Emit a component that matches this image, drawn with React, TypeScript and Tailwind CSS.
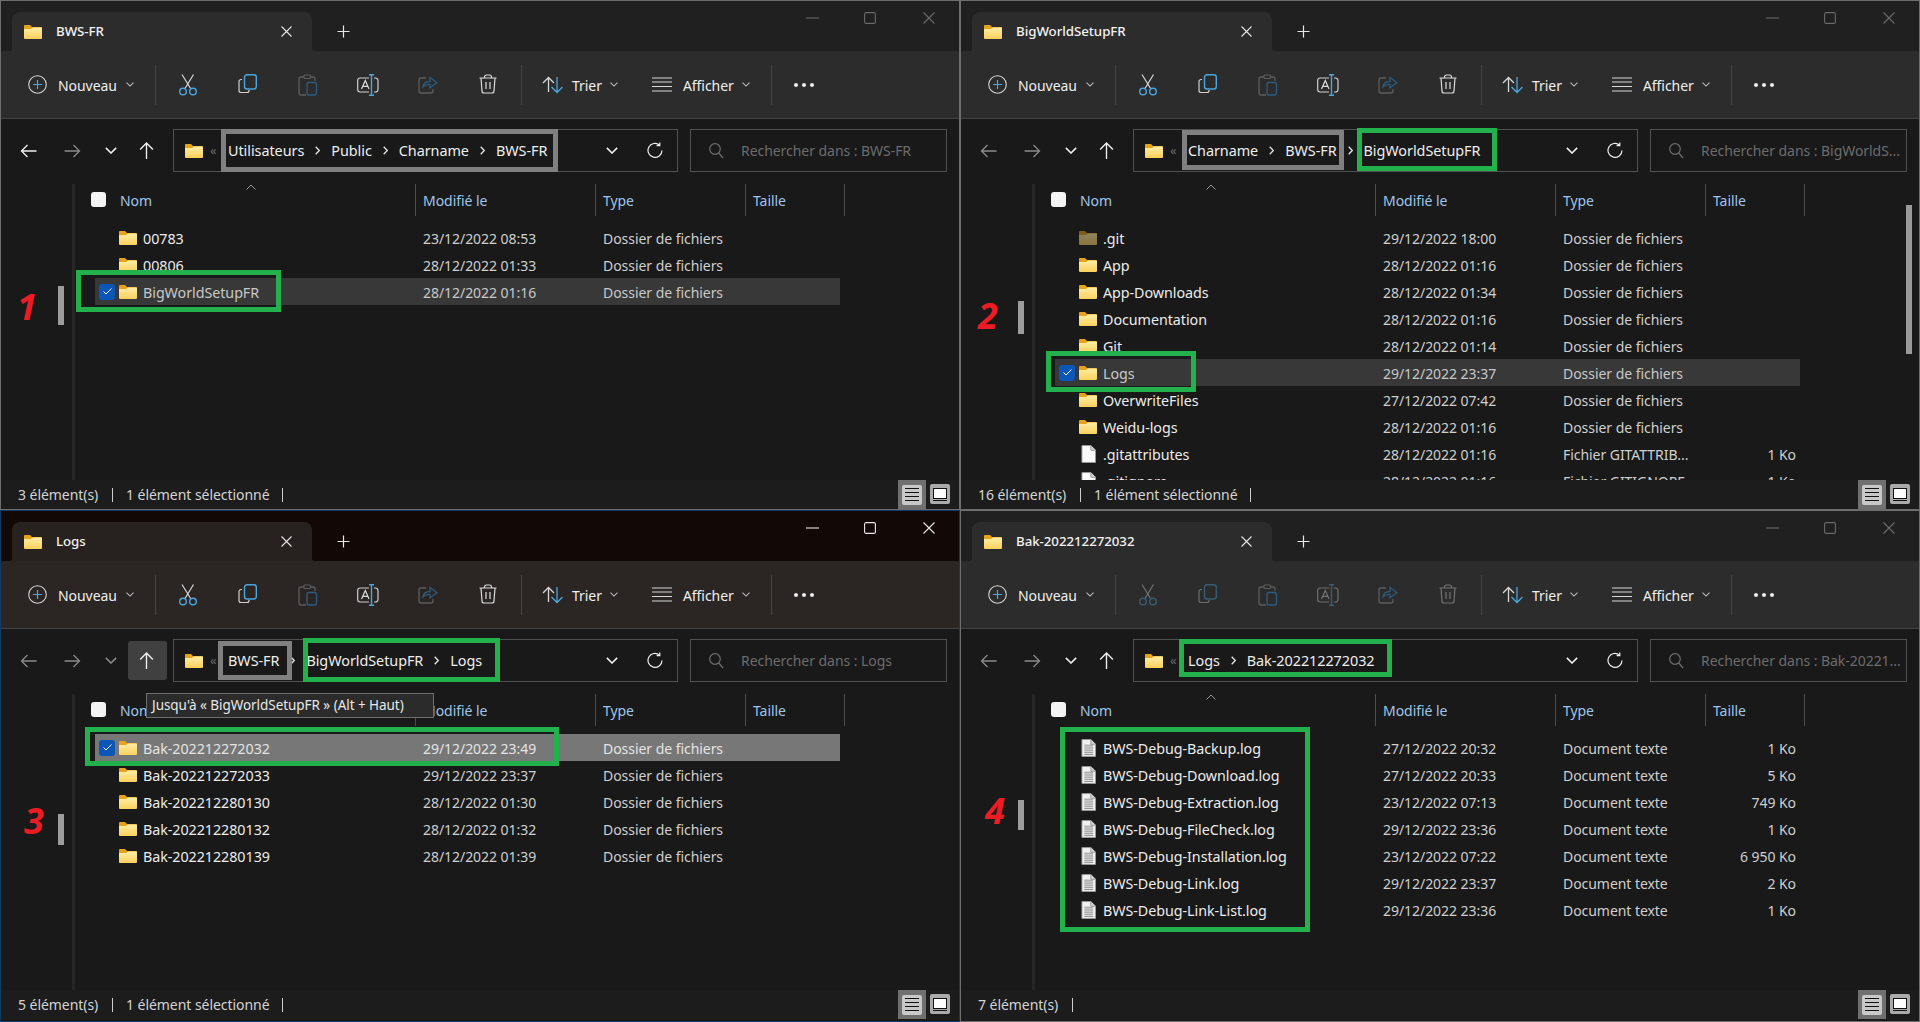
import React from "react";

const BLUE = "#4aa6de";

function Folder({ dim = false }: { dim?: boolean }) {
  const id = React.useId();
  return (
    <svg width="18" height="14" viewBox="0 0 18 14" className={dim ? "opacity-50 flex-none" : "flex-none"}>
      <defs>
        <linearGradient id={id} x1="0" y1="0" x2="0" y2="1">
          <stop offset="0" stopColor="#ffeea6" />
          <stop offset="1" stopColor="#fbd05c" />
        </linearGradient>
      </defs>
      <path d="M0 1Q0 0 1 0H6L8 2H17Q18 2 18 3V8H0Z" fill="#e7a31c" />
      <path d="M0 4H7L9 2.6H17.2Q18 2.6 18 3.4V13Q18 14 17 14H1Q0 14 0 13Z" fill={`url(#${id})`} />
    </svg>
  );
}

function FileIcon({ lines = false }: { lines?: boolean }) {
  return (
    <svg width="15" height="18" viewBox="0 0 16 19" className="flex-none">
      <path d="M1 .5H10.5L15.5 5.5V18.5H1Z" fill={lines ? "#f1f1f1" : "#fafafa"} stroke="#9a9a9a" strokeWidth="1" />
      <path d="M10.5 .5V5.5H15.5" fill="#d6d6d6" stroke="#9a9a9a" strokeWidth="1" />
      {lines && <path d="M3.5 6.5H13M3.5 8.5H13M3.5 10.5H13M3.5 12.5H13M3.5 14.5H13M3.5 16.5H13" stroke="#8a8a8a" strokeWidth="1" />}
    </svg>
  );
}

const Cut = () => (
  <svg width="20" height="22" viewBox="0 0 20 22" fill="none">
    <path d="M4 .5L12.6 14.5M15.5 .5L7 14.5" stroke="#d8d8d8" strokeWidth="1.2" />
    <circle cx="5" cy="17.5" r="3.3" stroke={BLUE} strokeWidth="1.4" />
    <circle cx="15" cy="17.5" r="3.3" stroke={BLUE} strokeWidth="1.4" />
  </svg>
);
const Copy = () => (
  <svg width="20" height="20" viewBox="0 0 20 20" fill="none">
    <path d="M4 5.5H3A2 2 0 0 0 1 7.500V16.500A2 2 0 0 0 3 18.500H9A2 2 0 0 0 11 16.500V16" stroke="#cfcfcf" strokeWidth="1.2" />
    <rect x="6.500" y=".7" width="11.800" height="14.300" rx="2.500" stroke={BLUE} strokeWidth="1.4" />
  </svg>
);
const Paste = () => (
  <svg width="20" height="22" viewBox="0 0 20 22" fill="none">
    <path d="M6 3H3A2 2 0 0 0 1 5V19A2 2 0 0 0 3 21H8M12 3H15A2 2 0 0 1 17 5V7" stroke="#5c5c5c" strokeWidth="1.3" />
    <rect x="6" y="1" width="6.500" height="3.500" rx="1" stroke="#5c5c5c" strokeWidth="1.200" />
    <rect x="9" y="8.500" width="9.500" height="12.500" rx="2" stroke="#2e5c7e" strokeWidth="1.300" />
  </svg>
);
const Rename = () => (
  <svg width="22" height="22" viewBox="0 0 22 22" fill="none">
    <path d="M12 4H3A2.500 2.500 0 0 0 .7 6.500V15.500A2.500 2.500 0 0 0 3 18H12" stroke="#cfcfcf" strokeWidth="1.200" />
    <path d="M17 4H18.500A2.500 2.500 0 0 1 21 6.500V15.500A2.500 2.500 0 0 1 18.500 18H17" stroke="#cfcfcf" strokeWidth="1.200" />
    <path d="M4.500 15L8.300 6.500L12 15M5.800 12.300H10.800" stroke="#dcdcdc" strokeWidth="1.200" />
    <path d="M12 .7H17M12 21.300H17M14.500 .7V21.300" stroke={BLUE} strokeWidth="1.400" />
  </svg>
);
const Share = () => (
  <svg width="20" height="20" viewBox="0 0 20 20" fill="none">
    <path d="M8 4H3A2 2 0 0 0 1 6V17A2 2 0 0 0 3 19H13A2 2 0 0 0 15 17V15" stroke="#5c5c5c" strokeWidth="1.300" />
    <path d="M5 13C5.500 9 8.500 7.500 12 7.500V3.500L19 8.700L12 13.800V10.500C9.500 10.300 7 11 5 13Z" stroke="#2e5c7e" strokeWidth="1.300" />
  </svg>
);
const Trash = () => (
  <svg width="18" height="20" viewBox="0 0 18 20" fill="none" stroke="#dcdcdc" strokeWidth="1.200">
    <path d="M.5 4H17.500M5.500 4V3A2 2 0 0 1 7.500 1H10.500A2 2 0 0 1 12.500 3V4" />
    <path d="M2 4L3 17A2 2 0 0 0 5 19H13A2 2 0 0 0 15 17L16 4" />
    <path d="M7 8V15M11 8V15" />
  </svg>
);
const Sort = () => (
  <svg width="22" height="18" viewBox="0 0 22 18" fill="none" strokeWidth="1.300">
    <path d="M6.500 16V1.500M1 7L6.500 1.500L12 7" stroke="#d8d8d8" />
    <path d="M15 1V16.500M9.500 11L15 16.500L20.500 11" stroke={BLUE} />
  </svg>
);
const Lines = () => (
  <svg width="20" height="15" viewBox="0 0 20 15" stroke="#d8d8d8" strokeWidth="1.100">
    <path d="M0 1H20M0 5H20M0 9.500H20M0 14H20" />
  </svg>
);
const ChevDown = ({ c = "#bdbdbd", w = 8 }: { c?: string; w?: number }) => (
  <svg width={w} height={w * 0.6} viewBox="0 0 10 6" fill="none" stroke={c} strokeWidth="1.300">
    <path d="M.7 .7L5 5L9.300 .7" />
  </svg>
);
const Crumb = () => (
  <svg width="5" height="9" viewBox="0 0 5 9" fill="none" stroke="#e4e4e4" strokeWidth="1.300" className="flex-none">
    <path d="M.7 .7L4.300 4.500L.7 8.300" />
  </svg>
);

type Row = { name: string; date: string; type: string; size?: string; icon: "folder" | "dim" | "file" | "log"; selected?: boolean };
type Note = { cls: string };
type Win = {
  title: string;
  crumbs: string[];
  search: string;
  rows: Row[];
  status: string;
  statusSel: boolean;
  sepCls: string;
  notes: Note[];
  digit?: string;
  digitCls: string;
  barCls: string;
  focused?: boolean;
  noSel?: boolean;
  back: string;
  chev: string;
  scroll?: boolean;
  tooltip?: boolean;
  heightCls: string;
  statusCls: string;
  rowSelCls?: string;
};

const d = "Dossier de fichiers";

const wins: Win[] = [
  {
    title: "BWS-FR",
    crumbs: ["Utilisateurs", "Public", "Charname", "BWS-FR"],
    search: "Rechercher dans : BWS-FR",
    rows: [
      { name: "00783", date: "23/12/2022 08:53", type: d, icon: "folder" },
      { name: "00806", date: "28/12/2022 01:33", type: d, icon: "folder" },
      { name: "BigWorldSetupFR", date: "28/12/2022 01:16", type: d, icon: "folder", selected: true },
    ],
    status: "3 élément(s)",
    statusSel: true,
    sepCls: "w-[94px]",
    notes: [
      { cls: "left-[221px] top-[129px] w-[337px] h-[43px] border-[#808080]" },
      { cls: "left-[76px] top-[270px] w-[205px] h-[42px] border-[#22b14c]" },
    ],
    digit: "1",
    digitCls: "left-[17px] top-[289px]",
    barCls: "top-[286px] h-[39px]",
    back: "#f0f0f0",
    chev: "#f0f0f0",
    heightCls: "h-[510px]",
    statusCls: "",
  },
  {
    title: "BigWorldSetupFR",
    crumbs: ["Charname", "BWS-FR", "BigWorldSetupFR"],
    search: "Rechercher dans : BigWorldS...",
    rows: [
      { name: ".git", date: "29/12/2022 18:00", type: d, icon: "dim" },
      { name: "App", date: "28/12/2022 01:16", type: d, icon: "folder" },
      { name: "App-Downloads", date: "28/12/2022 01:34", type: d, icon: "folder" },
      { name: "Documentation", date: "28/12/2022 01:16", type: d, icon: "folder" },
      { name: "Git", date: "28/12/2022 01:14", type: d, icon: "folder" },
      { name: "Logs", date: "29/12/2022 23:37", type: d, icon: "folder", selected: true },
      { name: "OverwriteFiles", date: "27/12/2022 07:42", type: d, icon: "folder" },
      { name: "Weidu-logs", date: "28/12/2022 01:16", type: d, icon: "folder" },
      { name: ".gitattributes", date: "28/12/2022 01:16", type: "Fichier GITATTRIB...", size: "1 Ko", icon: "file" },
      { name: ".gitignore", date: "28/12/2022 01:16", type: "Fichier GITIGNORE", size: "1 Ko", icon: "file" },
    ],
    status: "16 élément(s)",
    statusSel: true,
    sepCls: "w-[102px]",
    notes: [
      { cls: "left-[222px] top-[130px] w-[162px] h-[40px] border-[#808080]" },
      { cls: "left-[397px] top-[128px] w-[140px] h-[43px] border-[#22b14c]" },
      { cls: "left-[86px] top-[351px] w-[150px] h-[41px] border-[#22b14c]" },
    ],
    digit: "2",
    digitCls: "left-[18px] top-[298px]",
    barCls: "top-[301px] h-[33px]",
    back: "#8a8a8a",
    chev: "#f0f0f0",
    scroll: true,
    heightCls: "h-[510px]",
    statusCls: "",
  },
  {
    title: "Logs",
    crumbs: ["BWS-FR", "BigWorldSetupFR", "Logs"],
    search: "Rechercher dans : Logs",
    rows: [
      { name: "Bak-202212272032", date: "29/12/2022 23:49", type: d, icon: "folder", selected: true },
      { name: "Bak-202212272033", date: "29/12/2022 23:37", type: d, icon: "folder" },
      { name: "Bak-202212280130", date: "28/12/2022 01:30", type: d, icon: "folder" },
      { name: "Bak-202212280132", date: "28/12/2022 01:32", type: d, icon: "folder" },
      { name: "Bak-202212280139", date: "28/12/2022 01:39", type: d, icon: "folder" },
    ],
    status: "5 élément(s)",
    statusSel: true,
    sepCls: "w-[94px]",
    notes: [
      { cls: "left-[218px] top-[131px] w-[74px] h-[39px] border-[#808080]" },
      { cls: "left-[303px] top-[128px] w-[197px] h-[44px] border-[#22b14c]" },
      { cls: "left-[85px] top-[217px] w-[474px] h-[39px] border-[#22b14c]" },
    ],
    digit: "3",
    digitCls: "left-[24px] top-[293px]",
    barCls: "top-[304px] h-[31px]",
    focused: true,
    back: "#8a8a8a",
    chev: "#8a8a8a",
    tooltip: true,
    heightCls: "h-[512px]",
    statusCls: "mb-[2px]",
    rowSelCls: "bg-[#777777] text-[#e4e4e4]",
  },
  {
    title: "Bak-202212272032",
    crumbs: ["Logs", "Bak-202212272032"],
    search: "Rechercher dans : Bak-20221...",
    rows: [
      { name: "BWS-Debug-Backup.log", date: "27/12/2022 20:32", type: "Document texte", size: "1 Ko", icon: "log" },
      { name: "BWS-Debug-Download.log", date: "27/12/2022 20:33", type: "Document texte", size: "5 Ko", icon: "log" },
      { name: "BWS-Debug-Extraction.log", date: "23/12/2022 07:13", type: "Document texte", size: "749 Ko", icon: "log" },
      { name: "BWS-Debug-FileCheck.log", date: "29/12/2022 23:36", type: "Document texte", size: "1 Ko", icon: "log" },
      { name: "BWS-Debug-Installation.log", date: "23/12/2022 07:22", type: "Document texte", size: "6 950 Ko", icon: "log" },
      { name: "BWS-Debug-Link.log", date: "29/12/2022 23:37", type: "Document texte", size: "2 Ko", icon: "log" },
      { name: "BWS-Debug-Link-List.log", date: "29/12/2022 23:36", type: "Document texte", size: "1 Ko", icon: "log" },
    ],
    status: "7 élément(s)",
    statusSel: false,
    sepCls: "w-[94px]",
    notes: [
      { cls: "left-[219px] top-[129px] w-[213px] h-[38px] border-[#22b14c]" },
      { cls: "left-[100px] top-[217px] w-[250px] h-[205px] border-[#22b14c]" },
    ],
    digit: "4",
    digitCls: "left-[25px] top-[283px]",
    barCls: "top-[290px] h-[30px]",
    noSel: true,
    back: "#8a8a8a",
    chev: "#f0f0f0",
    heightCls: "h-[512px]",
    statusCls: "mb-[2px]",
  },
];

function Window({ w }: { w: Win }) {
  const ctl = w.focused ? "#e8e8e8" : "#6a6a6a";
  const dimAll = w.noSel ? "opacity-40" : "";
  const tabFill = w.focused ? "#27211f" : "#2c2c2c";
  return (
    <div className={`relative flex flex-col overflow-hidden bg-[#191919] outline-1 -outline-offset-1 ${w.heightCls} ${w.focused ? "outline-[#0e3a64]" : "outline-[#6e6e6e]"}`}>
      {/* title bar */}
      <div className={`flex h-[51px] flex-none pl-[12px] pt-[12px] ${w.focused ? "bg-[#120805]" : "bg-[#202020]"}`}>
        <div className={`relative flex h-[39px] w-[300px] items-center rounded-t-[8px] pl-[12px] pr-[20px] ${w.focused ? "bg-[#27211f]" : "bg-[#2c2c2c]"}`}>
          <svg className="absolute bottom-0 left-[-3px]" width="3" height="3" viewBox="0 0 3 3"><path d="M3 0Q3 3 0 3H3Z" fill={tabFill} /></svg>
          <svg className="absolute bottom-0 right-[-3px]" width="3" height="3" viewBox="0 0 3 3"><path d="M0 0Q0 3 3 3H0Z" fill={tabFill} /></svg>
          <Folder />
          <span className="ml-[14px] text-[13.300px] font-medium text-[#f2f2f2]">{w.title}</span>
          <svg className="ml-auto" width="11" height="11" viewBox="0 0 11 11" stroke="#e6e6e6" strokeWidth="1.100"><path d="M.5 .5L10.500 10.500M10.500 .5L.5 10.500" /></svg>
        </div>
        <div className="flex h-[39px] w-[62px] flex-none items-center justify-center">
          <svg width="13" height="13" viewBox="0 0 13 13" stroke="#e8e8e8" strokeWidth="1.200"><path d="M6.500 .5V12.500M.5 6.500H12.500" /></svg>
        </div>
        <div className="ml-auto mt-[-1px] flex h-[14px] items-center">
          <svg width="13" height="2" viewBox="0 0 13 2" stroke={ctl} strokeWidth="1.100"><path d="M0 1H13" /></svg>
          <svg className="ml-[45px]" width="12" height="12" viewBox="0 0 12 12" fill="none" stroke={ctl} strokeWidth="1.100"><rect x=".6" y=".6" width="10.800" height="10.800" rx="1.500" /></svg>
          <svg className="ml-[47px] mr-[25px]" width="12" height="12" viewBox="0 0 12 12" stroke={ctl} strokeWidth="1.100"><path d="M.5 .5L11.500 11.500M11.500 .5L.5 11.500" /></svg>
        </div>
      </div>
      {/* command bar */}
      <div className={`flex h-[68px] flex-none items-center border-b border-[#444444] ${w.focused ? "bg-[#2b2624]" : "bg-[#2c2c2c]"}`}>
        <div className="flex w-[155px] flex-none items-center pl-[28px]">
          <svg width="19" height="19" viewBox="0 0 19 19" fill="none">
            <circle cx="9.500" cy="9.500" r="8.800" stroke="#d6d6d6" strokeWidth="1.100" />
            <path d="M9.500 5V14M5 9.500H14" stroke={BLUE} strokeWidth="1.200" />
          </svg>
          <span className="ml-[11px] mt-[2px] text-[#efefef]">Nouveau</span>
          <span className="ml-[9px]"><ChevDown /></span>
        </div>
        <div className="h-[40px] w-px flex-none bg-[#444444]" />
        <div className="ml-[2px] flex">
          <div className={`flex w-[60px] justify-center ${dimAll}`}><Cut /></div>
          <div className={`flex w-[60px] justify-center ${dimAll}`}><Copy /></div>
          <div className="flex w-[60px] justify-center"><Paste /></div>
          <div className={`flex w-[60px] justify-center ${dimAll}`}><Rename /></div>
          <div className="flex w-[60px] justify-center"><Share /></div>
          <div className={`flex w-[60px] justify-center ${dimAll}`}><Trash /></div>
        </div>
        <div className="ml-[3px] h-[40px] w-px flex-none bg-[#444444]" />
        <div className="ml-[20px] flex flex-none items-center">
          <Sort />
          <span className="ml-[8px] mt-[2px] text-[#efefef]">Trier</span>
          <span className="ml-[8px]"><ChevDown /></span>
        </div>
        <div className="ml-[35px] flex flex-none items-center">
          <span className="ml-[-1px]"><Lines /></span>
          <span className="ml-[11px] mt-[2px] text-[#efefef]">Afficher</span>
          <span className="ml-[8px]"><ChevDown /></span>
        </div>
        <div className="ml-[21px] h-[40px] w-px flex-none bg-[#444444]" />
        <div className="ml-[22px] flex gap-[4px]">
          <div className="size-[4px] rounded-full bg-[#eeeeee]" />
          <div className="size-[4px] rounded-full bg-[#eeeeee]" />
          <div className="size-[4px] rounded-full bg-[#eeeeee]" />
        </div>
      </div>
      {/* address row */}
      <div className="flex h-[65px] flex-none items-center pb-[2px]">
        <div className="flex w-[50px] flex-none justify-center pl-[6px]">
          <svg width="17" height="14" viewBox="0 0 16 14" fill="none" stroke={w.back} strokeWidth="1.300"><path d="M16 7H1M7 1L1 7L7 13" /></svg>
        </div>
        <div className="flex w-[44px] flex-none justify-center">
          <svg width="17" height="14" viewBox="0 0 16 14" fill="none" stroke="#8a8a8a" strokeWidth="1.300"><path d="M0 7H15M9 1L15 7L9 13" /></svg>
        </div>
        <div className="flex w-[33px] flex-none justify-center"><ChevDown c={w.chev} w={12} /></div>
        <div className={`ml-[1px] flex h-[39px] w-[39px] flex-none items-center justify-center rounded-[3px] pr-[2px] ${w.tooltip ? "bg-[#404040]" : ""}`}>
          <svg width="15" height="17" viewBox="0 0 14 16" fill="none" stroke="#f0f0f0" strokeWidth="1.300"><path d="M7 16V1M1 7L7 1L13 7" /></svg>
        </div>
        <div className="ml-[6px] flex h-[43px] w-[505px] flex-none items-center border border-[#505050] pl-[11px]">
          <Folder />
          <span className="ml-[7px] w-[18px] flex-none text-[13px] leading-none text-[#6a6a6a]">«</span>
          {w.crumbs.map((c, i) => (
            <React.Fragment key={c}>
              {i > 0 && <span className="flex w-[27px] flex-none justify-center"><Crumb /></span>}
              <span className="text-[14.400px] text-[#eeeeee]">{c}</span>
            </React.Fragment>
          ))}
          <span className="ml-auto"><ChevDown c="#f0f0f0" w={12} /></span>
          <svg className="ml-[29px] mr-[13px]" width="17" height="17" viewBox="0 0 17 17" fill="none" stroke="#eeeeee" strokeWidth="1.200"><path d="M15 8.500A7 7 0 1 1 12.500 3M12.800 .5V3.700H9.600" /></svg>
        </div>
        <div className="ml-[12px] flex h-[43px] w-[257px] flex-none items-center overflow-hidden border border-[#505050] pl-[18px]">
          <svg width="15" height="16" viewBox="0 0 15 16" fill="none" stroke="#6e6e6e" strokeWidth="1.200"><circle cx="6" cy="6" r="5.300" /><path d="M9.800 10L14 15" /></svg>
          <span className="ml-[17px] whitespace-nowrap text-[#6c6c6c]">{w.search}</span>
        </div>
      </div>
      {/* body */}
      <div className="flex min-h-0 flex-1">
        <div className="w-[72px] flex-none" />
        <div className="w-[3px] flex-none bg-[#262626]" />
        <div className="min-w-0 flex-1 overflow-hidden">
          <div className="flex h-[32px] pl-[16px] text-[#9fc6ea]">
            <div className="mt-[8px] size-[15px] flex-none rounded-[3px] bg-[#f4f4f4]" />
            <div className="relative ml-[14px] flex w-[295px] flex-none items-center">
              Nom
              <svg className="absolute left-[126px] top-[0px]" width="10" height="6" viewBox="0 0 10 6" fill="none" stroke="#9a9a9a" strokeWidth="1"><path d="M.5 5.500L5 1L9.500 5.500" /></svg>
            </div>
            <div className="flex w-[180px] flex-none items-center border-l border-[#4d4d4d] pl-[7px]">Modifié le</div>
            <div className="flex w-[150px] flex-none items-center border-l border-[#4d4d4d] pl-[7px]">Type</div>
            <div className="flex w-[100px] flex-none items-center border-x border-[#4d4d4d] pl-[7px]">Taille</div>
          </div>
          <div className="ml-[20px] mt-[8px] w-[745px]">
            {w.rows.map((r) => (
              <div key={r.name} className={`flex h-[27px] items-center ${r.selected ? w.rowSelCls ?? "bg-[#383838] text-[#c8c8c8]" : "text-[#cfcfcf]"}`}>
                <div className="flex w-[24px] flex-none pl-[4px]">
                  {r.selected && (
                    <div className="flex size-[16px] items-center justify-center rounded-[3px] bg-[#0a57b8]">
                      <svg width="9" height="7" viewBox="0 0 9 7" fill="none" stroke="#ffffff" strokeWidth="1"><path d="M.5 3.500L3 6L8.500 .5" /></svg>
                    </div>
                  )}
                </div>
                <div className="mr-[6px] flex w-[18px] flex-none justify-center">
                  {r.icon === "folder" && <Folder />}
                  {r.icon === "dim" && <Folder dim />}
                  {r.icon === "file" && <FileIcon />}
                  {r.icon === "log" && <FileIcon lines />}
                </div>
                <div className={`w-[280px] flex-none whitespace-nowrap pt-[2px] text-[14.300px] ${r.selected ? "" : "text-[#ececec]"}`}>{r.name}</div>
                <div className="w-[180px] flex-none pt-[2px]">{r.date}</div>
                <div className="w-[150px] flex-none pt-[2px]">{r.type}</div>
                <div className="w-[83px] flex-none pt-[2px] text-right">{r.size}</div>
              </div>
            ))}
          </div>
        </div>
      </div>
      {/* status */}
      <div className={`flex h-[30px] flex-none items-center bg-[#1c1c1c] pl-[18px] text-[#d4d4d4] ${w.statusCls}`}>
        <span className={`${w.sepCls} mb-[2px] flex-none`}>{w.status}</span>
        <span className="h-[14px] w-px flex-none bg-[#cfcfcf]" />
        {w.statusSel && (
          <>
            <span className="mb-[2px] ml-[13px] w-[156px] flex-none">1 élément sélectionné</span>
            <span className="h-[14px] w-px flex-none bg-[#cfcfcf]" />
          </>
        )}
        <div className="ml-auto flex h-full items-start">
          <div className="flex h-[29px] w-[28px] items-center justify-center bg-[#707070]">
            <div className="flex size-[20px] flex-col items-center justify-center gap-[3px] rounded-[2px] bg-[#c8c8c8]">
              <div className="h-px w-[14px] bg-[#111111]" />
              <div className="h-px w-[14px] bg-[#111111]" />
              <div className="h-px w-[14px] bg-[#111111]" />
              <div className="h-px w-[14px] bg-[#111111]" />
            </div>
          </div>
          <div className="ml-[4px] mr-[10px] mt-[4px] flex size-[20px] flex-col items-center justify-center gap-[1px] rounded-[2px] bg-[#aaaaaa]">
            <div className="h-[11px] w-[14px] border border-[#111111] bg-white" />
            <div className="h-px w-[14px] bg-[#111111]" />
          </div>
        </div>
      </div>
      {/* annotations */}
      {w.notes.map((n) => (
        <div key={n.cls} className={`pointer-events-none absolute border-[5px] ${n.cls}`} />
      ))}
      <div className={`absolute left-[58px] w-[6px] bg-[#9c9c9c] ${w.barCls}`} />
      <span className={`absolute text-[36px] font-bold italic leading-none tracking-normal text-[#ed1c24] ${w.digitCls}`}>{w.digit}</span>
      {w.scroll && <div className="absolute left-[946px] top-[205px] h-[149px] w-[6px] bg-[#9a9a9a]" />}
      {w.tooltip && (
        <div className="absolute left-[146px] top-[183px] flex h-[25px] w-[288px] items-center border border-[#6e6e6e] bg-[#2b2b2b] pl-[5px] text-[13.500px] text-[#e8e8e8]">
          Jusqu'à « BigWorldSetupFR » (Alt + Haut)
        </div>
      )}
    </div>
  );
}

export default function App() {
  return (
    <div className="grid h-[1022px] w-[1920px] grid-cols-2 content-start overflow-hidden bg-[#191919] font-['Noto_Sans',sans-serif] text-[14px] tracking-[-0.05px]">
      {wins.map((w) => (
        <Window key={w.title} w={w} />
      ))}
    </div>
  );
}
